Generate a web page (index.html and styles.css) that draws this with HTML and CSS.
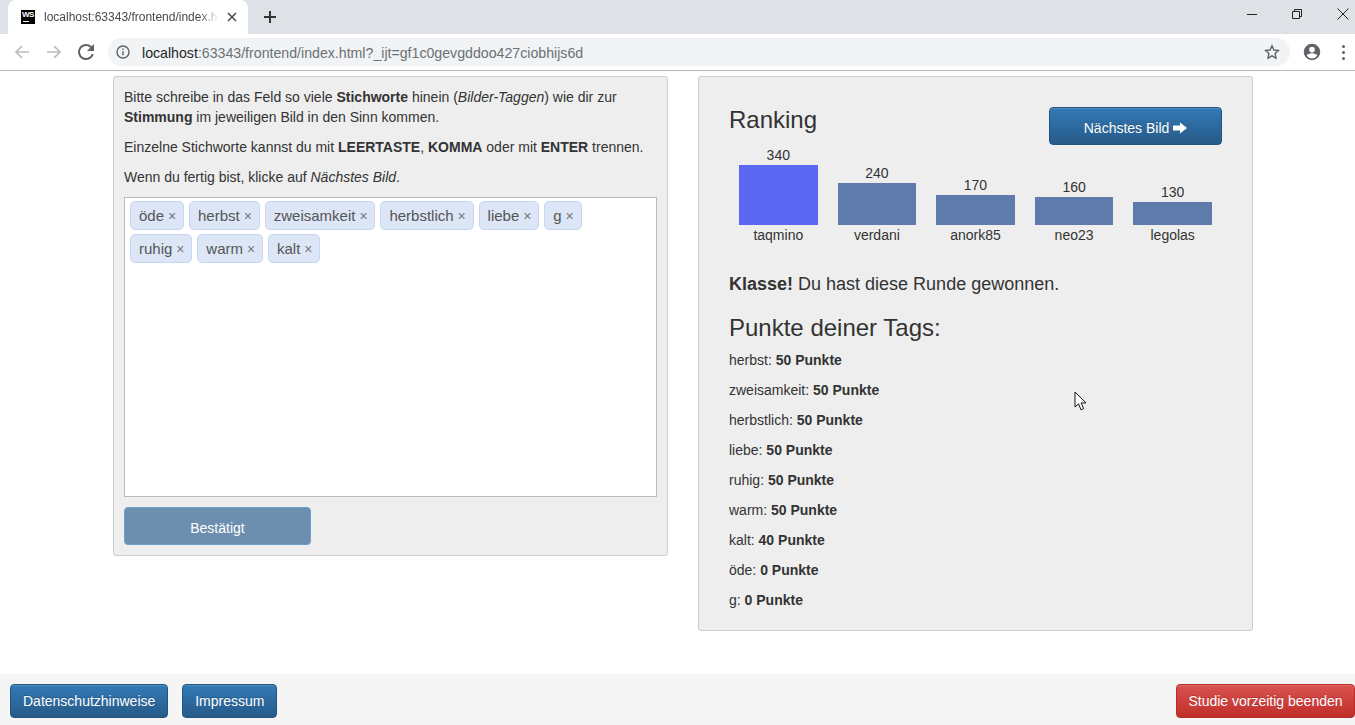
FILE: index.html
```html
<!DOCTYPE html>
<html lang="de">

<head>
    <meta charset="UTF-8">
    <meta name="viewport" content="width=device-width, initial-scale=1.0">
    <title>localhost:63343/frontend/index.html</title>
    <link rel="stylesheet" href="styles.css">
</head>

<body>
    <header class="browser">
        <div class="tabstrip">
            <div class="tab">
                <span class="favicon">WS</span>
                <span class="tab-title">localhost:63343/frontend/index.h</span>
                <svg class="tab-close" width="10" height="10" viewBox="0 0 10 10"><path d="M1 1l8 8M9 1l-8 8" /></svg>
            </div>
            <svg class="new-tab" width="12" height="12" viewBox="0 0 12 12"><path d="M6 0v12M0 6h12" /></svg>
            <div class="win-controls">
                <svg width="12" height="12" viewBox="0 0 12 12"><path d="M1 6.500h10" /></svg>
                <svg width="12" height="12" viewBox="0 0 12 12"><path d="M1.500 3.500h7v7h-7zM3.500 3.500v-2h7v7h-2" /></svg>
                <svg width="14" height="14" viewBox="0 0 14 14"><path d="M1.500 1.500l11 11M12.500 1.500l-11 11" /></svg>
            </div>
        </div>
        <div class="toolbar">
            <svg class="nav-icon nav-off" width="16" height="16" viewBox="0 0 16 16"><path d="M15 8H2M8 2L2 8l6 6" /></svg>
            <svg class="nav-icon nav-off" width="16" height="16" viewBox="0 0 16 16"><path d="M1 8h13M8 2l6 6-6 6" /></svg>
            <svg class="nav-reload" width="24" height="24" viewBox="0 0 24 24"><path d="M17.650 6.350A7.960 7.960 0 0 0 12 4a8 8 0 1 0 7.730 10h-2.080A6 6 0 1 1 12 6c1.660 0 3.140.69 4.220 1.780L13 11h7V4l-2.350 2.350z" /></svg>
            <div class="omnibox">
                <svg class="info-icon" width="14" height="14" viewBox="0 0 14 14"><circle cx="7" cy="7" r="6" /><path d="M7 6.200v4M7 3.500v1.400" /></svg>
                <span class="url"><span class="url-host">localhost</span>:63343/frontend/index.html?_ijt=gf1c0gevgddoo427ciobhijs6d</span>
                <svg class="star-icon" width="16" height="16" viewBox="0 0 16 16"><path d="M8 1.800l1.900 4.200 4.600.5-3.400 3.100.9 4.600L8 11.900l-4 2.300.9-4.600L1.500 6.500l4.600-.5z" /></svg>
            </div>
            <svg class="profile-icon" width="18" height="18" viewBox="0 0 24 24"><path d="M12 1a11 11 0 1 0 0 22 11 11 0 0 0 0-22zm0 4a3.800 3.800 0 1 1 0 7.600A3.800 3.800 0 0 1 12 5zm0 15.600a8.700 8.700 0 0 1-7-3.600c.1-2.300 4.700-3.500 7-3.500s6.900 1.200 7 3.500a8.700 8.700 0 0 1-7 3.600z" /></svg>
            <div class="kebab"><i></i><i></i><i></i></div>
        </div>
    </header>

    <main class="content">
        <section class="well well-left">
            <p>Bitte schreibe in das Feld so viele <b>Stichworte</b> hinein (<i>Bilder-Taggen</i>) wie dir zur <b>Stimmung</b> im jeweiligen Bild in den Sinn kommen.</p>
            <p>Einzelne Stichworte kannst du mit <b>LEERTASTE</b>, <b>KOMMA</b> oder mit <b>ENTER</b> trennen.</p>
            <p>Wenn du fertig bist, klicke auf <i>Nächstes Bild</i>.</p>
            <div class="tagbox">
                <span class="tag">öde <small>×</small></span>
                <span class="tag">herbst <small>×</small></span>
                <span class="tag">zweisamkeit <small>×</small></span>
                <span class="tag">herbstlich <small>×</small></span>
                <span class="tag">liebe <small>×</small></span>
                <span class="tag">g <small>×</small></span>
                <span class="tag">ruhig <small>×</small></span>
                <span class="tag">warm <small>×</small></span>
                <span class="tag">kalt <small>×</small></span>
            </div>
            <button class="btn btn-confirm">Bestätigt</button>
        </section>

        <section class="well well-right">
            <div class="rank-head">
                <h3>Ranking</h3>
                <button class="btn btn-blue btn-next">Nächstes Bild
                    <svg width="14" height="12" viewBox="0 0 14 12"><path d="M0 3.500h7V.5L14 6l-7 5.500v-3H0z" /></svg>
                </button>
            </div>
            <div class="chart">
                <div class="chart-col"><span>340</span><div class="bar bar-win" style="height:60px"></div><span>taqmino</span></div>
                <div class="chart-col"><span>240</span><div class="bar" style="height:42px"></div><span>verdani</span></div>
                <div class="chart-col"><span>170</span><div class="bar" style="height:30px"></div><span>anork85</span></div>
                <div class="chart-col"><span>160</span><div class="bar" style="height:28px"></div><span>neo23</span></div>
                <div class="chart-col"><span>130</span><div class="bar" style="height:23px"></div><span>legolas</span></div>
            </div>
            <p class="result"><b>Klasse!</b> Du hast diese Runde gewonnen.</p>
            <h3 class="points-title">Punkte deiner Tags:</h3>
            <p>herbst: <b>50 Punkte</b></p>
            <p>zweisamkeit: <b>50 Punkte</b></p>
            <p>herbstlich: <b>50 Punkte</b></p>
            <p>liebe: <b>50 Punkte</b></p>
            <p>ruhig: <b>50 Punkte</b></p>
            <p>warm: <b>50 Punkte</b></p>
            <p>kalt: <b>40 Punkte</b></p>
            <p>öde: <b>0 Punkte</b></p>
            <p>g: <b>0 Punkte</b></p>
            <svg class="cursor" width="14" height="21" viewBox="0 0 14 21"><path d="M1 1v15l3.500-3.200 2.500 6 2.600-1.100-2.500-5.800H12z" /></svg>
        </section>
    </main>

    <footer class="footer">
        <button class="btn btn-blue">Datenschutzhinweise</button>
        <button class="btn btn-blue btn-imprint">Impressum</button>
        <button class="btn btn-red">Studie vorzeitig beenden</button>
    </footer>
</body>

</html>
```

FILE: styles.css
```css
html,
body {
    height: 100%;
}

body {
    margin: 0;
    display: flex;
    flex-direction: column;
    overflow: hidden;
    font-family: "Liberation Sans", Arial, sans-serif;
    font-size: 14px;
    line-height: 20px;
    color: #333;
    background-color: #fff;
}

/* browser frame */
.browser {
    flex: none;
}

.tabstrip {
    height: 34px;
    display: flex;
    align-items: center;
    background-color: #dee1e6;
}

.tab {
    width: 240px;
    height: 34px;
    margin-left: 8px;
    padding-left: 13px;
    box-sizing: border-box;
    display: flex;
    align-items: center;
    background-color: #fff;
    border-radius: 8px 8px 0 0;
}

.favicon {
    width: 14px;
    height: 14px;
    flex: none;
    background-color: #000;
    color: #fff;
    font-size: 8px;
    line-height: 10px;
    font-weight: bold;
    text-align: center;
    letter-spacing: -.5px;
}

.favicon::after {
    content: "";
    display: block;
    width: 6px;
    height: 1px;
    margin: 1px 0 0 2px;
    background-color: #fff;
}

.tab-title {
    width: 175px;
    margin-left: 9px;
    font-size: 12px;
    color: #45484c;
    white-space: nowrap;
    -webkit-mask-image: linear-gradient(to right, #000 155px, transparent 175px);
    mask-image: linear-gradient(to right, #000 155px, transparent 175px);
}

.tab-close {
    margin-left: 8px;
    fill: none;
    stroke: #4a4d51;
    stroke-width: 1.6;
}

.new-tab {
    margin-left: 16px;
    fill: none;
    stroke: #333;
    stroke-width: 2;
}

.win-controls {
    margin-left: auto;
    height: 28px;
    display: flex;
    justify-content: flex-end;
    align-items: center;
    gap: 33px;
    padding-right: 5px;
    align-self: flex-start;
}

.win-controls svg {
    fill: none;
    stroke: #222;
    stroke-width: 1;
}

.toolbar {
    height: 36px;
    display: flex;
    align-items: center;
    border-bottom: 1px solid #b8b8b8;
    padding-left: 14px;
    background-color: #fff;
}

.nav-icon {
    margin-right: 16px;
    fill: none;
    stroke-width: 1.7;
}

.nav-off {
    stroke: #b9bcc0;
}

.nav-reload {
    fill: #5f6368;
    margin-left: -4px;
    margin-right: 10px;
}

.omnibox {
    width: 1182px;
    height: 28px;
    box-sizing: border-box;
    padding: 0 10px 0 8px;
    display: flex;
    align-items: center;
    background-color: #f1f3f4;
    border-radius: 14px;
}

.info-icon {
    fill: none;
    stroke: #5f6368;
    stroke-width: 1.4;
}

.url {
    margin-left: 12px;
    padding-top: 1px;
    font-size: 14.170px;
    color: #6b7176;
    white-space: nowrap;
}

.url-host {
    color: #25282b;
}

.star-icon {
    margin-left: auto;
    fill: none;
    stroke: #5f6368;
    stroke-width: 1.4;
}

.profile-icon {
    margin-left: 13px;
    fill: #5f6368;
}

.kebab {
    margin-left: 21px;
    display: flex;
    flex-direction: column;
    gap: 3px;
}

.kebab i {
    width: 3px;
    height: 3px;
    border-radius: 50%;
    background-color: #5f6368;
}

/* page */
.content {
    flex: 1;
    display: flex;
    align-items: flex-start;
    gap: 30px;
    padding: 5px 0 0 113px;
}

.well {
    width: 555px;
    box-sizing: border-box;
    background-color: #eee;
    border: 1px solid #ccc;
    border-radius: 3px;
}

.well-left {
    padding: 10px;
}

.well-right {
    position: relative;
    padding: 30px 30px 10px;
}

p {
    margin: 0 0 10px;
}

h3 {
    margin: 0;
    font-size: 24px;
    font-weight: normal;
    line-height: 26px;
}

.tagbox {
    height: 300px;
    box-sizing: border-box;
    padding: 3px 20px 3px 5px;
    display: flex;
    flex-wrap: wrap;
    align-content: flex-start;
    gap: 4px 5px;
    background-color: #fff;
    border: 1px solid #bbb;
}

.tag {
    height: 29px;
    box-sizing: border-box;
    padding: 0 6.800px 0 8px;
    display: flex;
    align-items: center;
    gap: 4px;
    font-size: 15px;
    color: #555;
    background-color: #dce6f7;
    border: 1px solid #c6d6f2;
    border-radius: 5px;
}

.tag small {
    font-size: 14px;
    color: #777;
}

.btn {
    height: 34px;
    padding: 0 12px;
    font-family: inherit;
    font-size: 14px;
    color: #fff;
    border: 1px solid transparent;
    border-radius: 4px;
    text-shadow: 0 -1px 0 rgba(0, 0, 0, .2);
}

.btn-blue {
    background-image: linear-gradient(to bottom, #337ab7, #265a88);
    border-color: #245580;
    box-shadow: inset 0 1px 0 rgba(255, 255, 255, .15);
}

.btn-imprint {
    width: 95px;
    padding: 0;
}

.btn-red {
    width: 179px;
    margin-left: auto;
    padding: 0;
    background-image: linear-gradient(to bottom, #d9534f, #c12e2a);
    border-color: #b92c28;
    box-shadow: inset 0 1px 0 rgba(255, 255, 255, .15);
}

.btn-confirm {
    display: block;
    width: 187px;
    height: 38px;
    margin-top: 10px;
    padding: 4px 0 0;
    background-color: #6c8fb0;
    border-color: #6f9fc9;
    text-shadow: none;
}

.rank-head {
    display: flex;
    justify-content: space-between;
    align-items: flex-start;
}

.btn-next {
    width: 173px;
    height: 38px;
    padding: 3px 0 0;
}

.btn-next svg {
    fill: #fff;
    vertical-align: -1px;
}

.chart {
    height: 100px;
    display: flex;
    margin-bottom: 26px;
}

.chart-col {
    flex: 1;
    padding: 0 10px;
    display: flex;
    flex-direction: column;
    justify-content: flex-end;
    text-align: center;
}

.bar {
    background-color: #5f7bac;
}

.bar-win {
    background-color: #5a67f0;
}

.result {
    margin-bottom: 18px;
    font-size: 18px;
    line-height: 26px;
}

.points-title {
    margin-bottom: 9px;
}

.cursor {
    position: absolute;
    left: 375px;
    top: 314px;
    fill: #fff;
    stroke: #111;
    stroke-width: 1;
}

.footer {
    flex: none;
    height: 51px;
    box-sizing: border-box;
    padding-top: 10px;
    padding-left: 10px;
    display: flex;
    align-items: flex-start;
    gap: 14px;
    background-color: #f5f5f5;
}
```
